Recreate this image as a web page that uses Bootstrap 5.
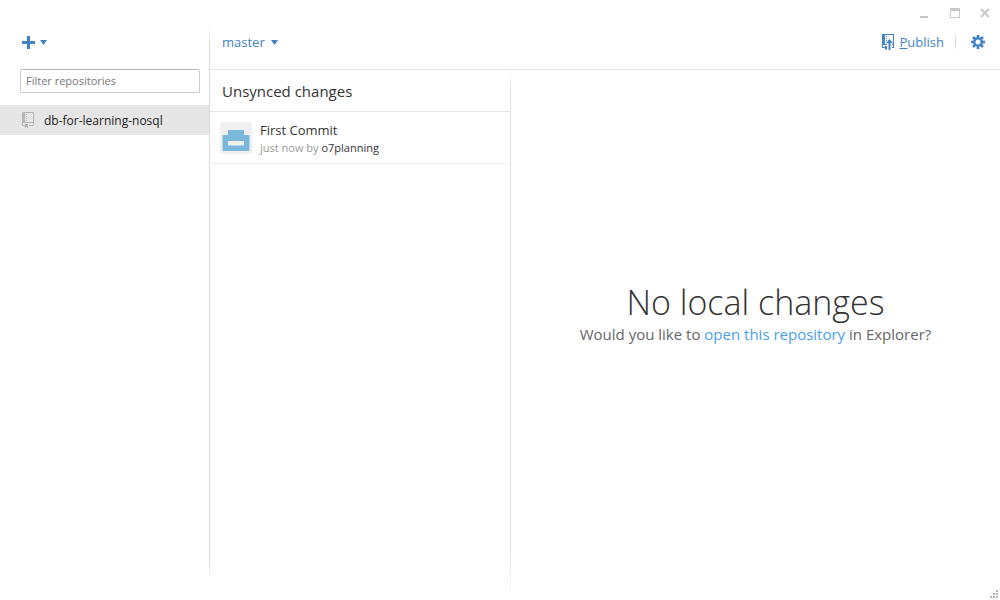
<!DOCTYPE html>
<html lang="en">
<head>
<meta charset="utf-8">
<meta name="viewport" content="width=device-width, initial-scale=1">
<title>GitHub</title>
<link href="https://cdn.jsdelivr.net/npm/bootstrap@5.3.0/dist/css/bootstrap.min.css" rel="stylesheet">
<script defer src="https://cdn.jsdelivr.net/npm/bootstrap@5.3.0/dist/js/bootstrap.bundle.min.js"></script>
<style>
  :root { --accent: #4183c4; --rule: #e5e5e5; }
  body { font-family: "Open Sans", "Noto Sans", sans-serif; font-size: 13px; line-height: 18px; color: #333; background: #fff; }
  svg { display: block; flex: none; }
  .plain-btn { border: 0; background: none; padding: 0; color: var(--accent); display: flex; align-items: center; gap: 6px; }
  .title-bar { height: 24px; padding: 8px 10px 0 0; gap: 20px; }
  .title-bar .plain-btn { color: #c8c8c8; }
  .sidebar { width: 210px; padding-bottom: 23px; }
  .sidebar-inner { border-right: 1px solid; border-image: linear-gradient(#fff, #dcdcdc 20px, #dcdcdc calc(100% - 16px), #fff) 1; }
  .sidebar-tools { height: 37px; padding-left: 22px; }
  .filter-wrap { padding: 8px 9px 12px 20px; }
  .filter-box { display: block; height: 24px; width: 100%; border: 1px solid #ccc; border-top-color: #b4b4b4; border-radius: 2px; padding: 0 5px 2px; font-size: 11px; }
  .filter-box::placeholder { color: #777; }
  .repo-row { height: 30px; background: #e6e6e6; color: #222; font-size: 12px; line-height: 20px; padding: 2px 0 0 22px; gap: 10px; }
  .repo-row svg { margin-bottom: 2px; }
  .toolbar { height: 46px; border-bottom: 1px solid var(--rule); padding: 0 15px 9px 12px; }
  .divider { width: 1px; height: 18px; margin: 0 15px 0 11px; background: linear-gradient(#fff, #ccc, #fff); }
  .history { width: 301px; border-right: 1px solid; border-image: linear-gradient(#fff, #e0e0e0 20px, #e0e0e0 calc(100% - 50px), #fff) 1; }
  .history h2 { font-size: 15px; line-height: 20px; padding: 11px 12px 10px; border-bottom: 1px solid var(--rule); }
  .commit { height: 52px; padding: 0 10px; gap: 8px; border-bottom: 1px solid #eee; }
  .commit-text { padding-top: 2px; }
  .commit-meta { font-size: 11px; color: #999; }
  .commit-meta span { color: #333; }
  .empty { padding-bottom: 46px; }
  .empty h1 { font-size: 34px; line-height: 44px; font-weight: 300; color: #333; }
  .empty p { font-size: 15px; line-height: 20px; color: #666; }
  .empty a { color: #4a9fea; }
  .resize-grip { right: 2px; bottom: 2px; }
</style>
</head>
<body>
<div class="vh-100 d-flex flex-column overflow-hidden position-relative">
  <header class="title-bar d-flex justify-content-end align-items-start flex-shrink-0">
    <button type="button" class="plain-btn" aria-label="Minimize"><svg width="10" height="10"><path d="M0 8h8v2H0z" fill="currentColor"/></svg></button>
    <button type="button" class="plain-btn" aria-label="Maximize"><svg width="10" height="10"><path fill-rule="evenodd" d="M0 0h10v10H0zM1 3v6h8V3z" fill="currentColor"/></svg></button>
    <button type="button" class="plain-btn" aria-label="Close"><svg width="10" height="10"><path d="M1 1l8 8M9 1L1 9" stroke="currentColor" stroke-width="2"/></svg></button>
  </header>
  <div class="d-flex flex-grow-1">
    <aside class="sidebar flex-shrink-0">
      <div class="sidebar-inner h-100">
        <div class="sidebar-tools d-flex align-items-center">
          <button type="button" class="plain-btn" aria-label="Add repository">
            <svg width="25" height="13" fill="currentColor"><path d="M0 5h5V0h3v5h5v3H8v5H5V8H0zM18 4h7l-3.500 5z"/></svg>
          </button>
        </div>
        <div class="filter-wrap"><input class="filter-box" type="text" placeholder="Filter repositories" aria-label="Filter repositories"></div>
        <a href="#" class="repo-row d-flex align-items-center text-decoration-none">
          <svg width="12" height="16" fill="#b4b4b4"><path fill-rule="evenodd" d="M1 0h10l1 1v12l-1 1H7v-1h4v-2H1v2h2v1H1l-1-1V1zM3 1v9h8V1z"/><path d="M4 2h1v1H4zM4 4h1v1H4zM4 6h1v1H4zM4 8h1v1H4zM3 12h3v4l-1.500-1.300L3 16z"/></svg>
          <span>db-for-learning-nosql</span>
        </a>
      </div>
    </aside>
    <main class="d-flex flex-column flex-grow-1">
      <div class="toolbar d-flex align-items-center justify-content-between">
        <button type="button" class="plain-btn"><span>master</span><svg width="8" height="5"><path d="M0 0h7L3.500 5z" fill="currentColor"/></svg></button>
        <div class="d-flex align-items-center">
          <button type="button" class="plain-btn">
            <svg width="12" height="16" fill="currentColor"><path fill-rule="evenodd" d="M0 0h12v14h-2v-1h1v-2h-1v-1h1V1H3v9h2v1H1v2h2v1H0z"/><path d="M4 2h1v1H4zM4 4h1v1H4zM4 6h1v1H4zM7.500 5L11 9H8.500v7h-2V9H4zM3 12h2v4l-1-1-1 1z"/></svg>
            <span><u>P</u>ublish</span>
          </button>
          <div class="divider"></div>
          <button type="button" class="plain-btn" aria-label="Settings">
            <svg width="14" height="14" viewBox="0 0 14 14"><circle cx="7" cy="7" r="3.800" fill="none" stroke="currentColor" stroke-width="2.600"/><path d="M7 0v2.500M7 11.500V14M0 7h2.500M11.500 7H14M2 2l1.800 1.800M10.200 10.200L12 12M12 2l-1.800 1.800M3.800 10.200L2 12" stroke="currentColor" stroke-width="2.600"/></svg>
          </button>
        </div>
      </div>
      <div class="d-flex flex-grow-1">
        <section class="history flex-shrink-0">
          <h2 class="m-0 fw-normal">Unsynced changes</h2>
          <div class="commit d-flex align-items-center">
            <svg width="32" height="32"><rect width="32" height="32" rx="3" fill="#f0f0f0"/><path fill-rule="evenodd" d="M8 8h16v5h5.500v16h-27V13H8zM8 19v4.500h16V19z" fill="#7ab9d9"/></svg>
            <div class="commit-text">First Commit<div class="commit-meta">just now by <span>o7planning</span></div></div>
          </div>
        </section>
        <section class="empty flex-grow-1 d-flex flex-column align-items-center justify-content-center">
          <h1 class="m-0">No local changes</h1>
          <p class="m-0">Would you like to <a href="#" class="text-decoration-none">open this repository</a> in Explorer?</p>
        </section>
      </div>
    </main>
  </div>
  <svg class="resize-grip position-absolute" width="8" height="8" fill="#b4b4b4"><path d="M6 0h2v2H6zM3 3h2v2H3zM6 3h2v2H6zM0 6h2v2H0zM3 6h2v2H3zM6 6h2v2H6z"/></svg>
</div>
</body>
</html>
